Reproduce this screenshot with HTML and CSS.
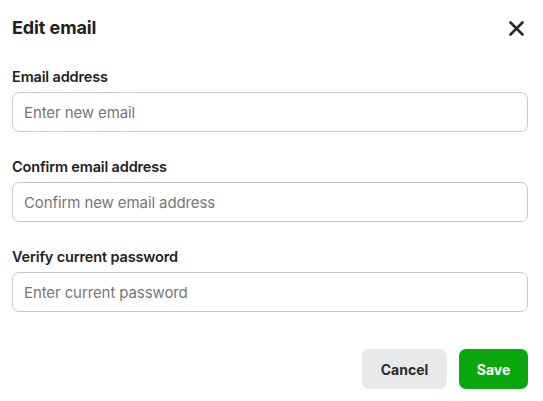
FILE: index.html
```html
<!DOCTYPE html>
<html lang="en">
<head>
<meta charset="utf-8">
<title>Edit email</title>
<link rel="stylesheet" href="styles.css">
</head>
<body>
<div class="dialog">
  <div class="header">
    <h1 class="title">Edit email</h1>
    <button class="close" aria-label="Close">
      <svg width="15" height="15" viewBox="0 0 15 15"><path d="M1.5 1.5 L13.5 13.5 M13.5 1.5 L1.5 13.5" stroke="#2b2b2b" stroke-width="2.6" stroke-linecap="round" fill="none"/></svg>
    </button>
  </div>
  <div class="fields">
    <label class="field">
      <span class="label">Email address</span>
      <input class="input" type="email" placeholder="Enter new email">
    </label>
    <label class="field">
      <span class="label">Confirm email address</span>
      <input class="input" type="email" placeholder="Confirm new email address">
    </label>
    <label class="field">
      <span class="label">Verify current password</span>
      <input class="input" type="password" placeholder="Enter current password">
    </label>
  </div>
  <div class="actions">
    <button class="btn btn-cancel">Cancel</button>
    <button class="btn btn-save">Save</button>
  </div>
</div>
</body>
</html>
```
FILE: styles.css
```css
* { box-sizing: border-box; }
html, body { margin: 0; padding: 0; background: #fff; }
body {
  font-family: Inter, "Liberation Sans", sans-serif;
  color: #222;
}
.dialog {
  width: 543px;
  padding: 16px 15px 0 12px;
  display: flex;
  flex-direction: column;
}
.header {
  display: flex;
  align-items: center;
  justify-content: space-between;
  height: 24px;
}
.title {
  margin: 0;
  font-size: 18px;
  font-weight: 700;
  line-height: 24px;
  letter-spacing: -0.1px;
}
.close {
  border: 0;
  background: none;
  padding: 0;
  width: 15px;
  height: 15px;
  margin-right: 4px;
  display: flex;
}
.fields {
  margin-top: 27px;
  display: flex;
  flex-direction: column;
  gap: 25px;
}
.field {
  display: flex;
  flex-direction: column;
  gap: 5px;
}
.label {
  font-size: 14.5px;
  font-weight: 600;
  line-height: 20px;
  letter-spacing: -0.15px;
  color: #222;
}
.input {
  height: 40px;
  width: 100%;
  border: 1px solid #c9c9c9;
  border-radius: 7px;
  padding: 0 11px;
  font-family: inherit;
  font-size: 15px;
  letter-spacing: -0.1px;
  color: #222;
  background: #fff;
}
.input::placeholder { color: #777; }
.actions {
  margin-top: 37px;
  display: flex;
  justify-content: flex-end;
  gap: 12px;
}
.btn {
  height: 40px;
  border: 0;
  border-radius: 7px;
  font-family: inherit;
  font-size: 14px;
  font-weight: 700;
}
.btn-cancel {
  width: 85px;
  background: #e8e9eb;
  color: #2b2b2b;
}
.btn-save {
  width: 69px;
  background: #0aa80e;
  color: #fff;
}
```
